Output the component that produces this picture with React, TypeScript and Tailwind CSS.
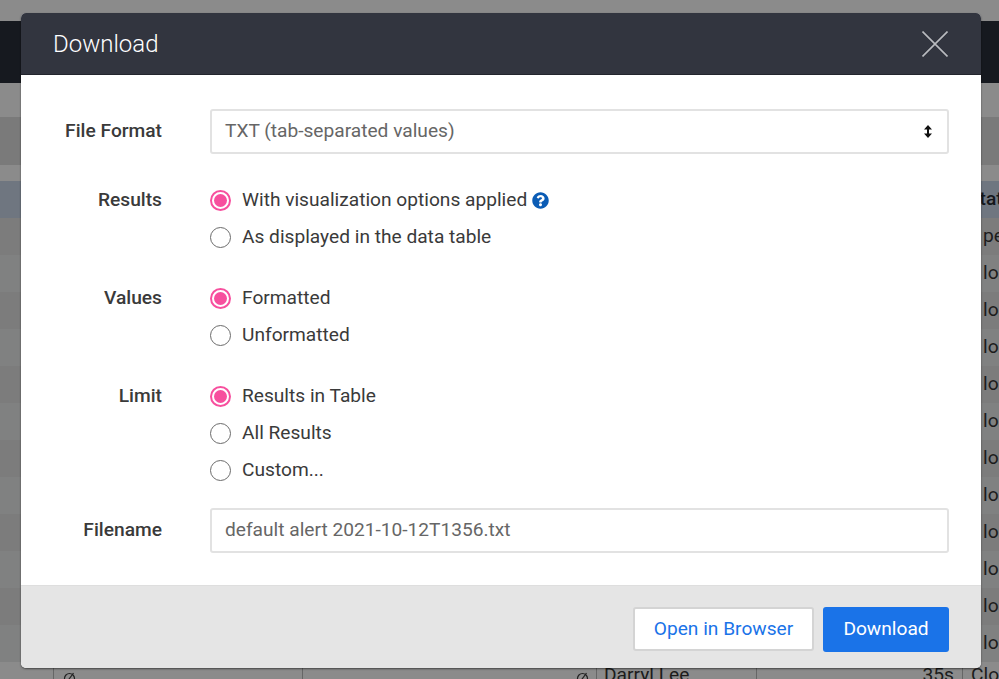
const rows = ['pen', 'losed', 'losed', 'losed', 'losed', 'losed', 'losed', 'losed', 'losed', 'losed', 'losed', 'losed'];

function Radio({ label, checked, help }: { label: string; checked?: boolean; help?: boolean }) {
  return (
    <label className="flex h-[37px] items-center">
      {checked ? (
        <span className="flex h-[21px] w-[21px] items-center justify-center rounded-full border-2 border-[#f74f9e] bg-white">
          <span className="h-[13px] w-[13px] rounded-full bg-[#f74f9e]" />
        </span>
      ) : (
        <span className="h-[21px] w-[21px] rounded-full border-[1.5px] border-[#6b6b6b] bg-white" />
      )}
      <span className="ml-[11px] text-[19.15px] text-[#3a3a3a]">{label}</span>
      {help && (
        <svg className="ml-[5px]" width="17" height="17" viewBox="0 0 512 512">
          <path
            fill="#0b5cb5"
            d="M504 256c0 137-111 248-248 248S8 393 8 256 119 8 256 8s248 111 248 248zM262.700 90c-54.500 0-89.300 23-116.500 63.800-3.500 5.300-2.400 12.400 2.700 16.300l34.700 26.300c5.200 3.900 12.600 3 16.700-2.100 17.900-22.700 30.100-35.800 57.300-35.800 20.400 0 45.700 13.100 45.700 33 0 15-12.400 22.700-32.600 34-23.600 13.200-54.800 29.700-54.800 70.900V302c0 6.600 5.400 12 12 12h56c6.600 0 12-5.400 12-12v-1.300c0-28.600 83.500-29.800 83.500-107.200C380 135.200 319.500 90 262.700 90zM256 339c-25.500 0-46.200 20.700-46.200 46.200 0 25.500 20.700 46.200 46.200 46.200s46.200-20.700 46.200-46.200C302.200 359.700 281.500 339 256 339z"
          />
        </svg>
      )}
    </label>
  );
}

function Label({ children }: { children: string }) {
  return <div className="w-[141px] shrink-0 text-right text-[19.2px] font-medium text-[#3a3a3a]">{children}</div>;
}

function NoEntry() {
  return (
    <svg width="13" height="13" viewBox="0 0 13 13" fill="none" stroke="#222222" strokeWidth="1.2">
      <circle cx="6.500" cy="6.500" r="5" />
      <path d="M10.500 1 L2.500 12" />
    </svg>
  );
}

export default function App() {
  return (
    <div className="relative h-[679px] w-[999px] overflow-hidden bg-[#8b8b8b] font-['Roboto',sans-serif]">
      {/* Page behind the overlay */}
      <div className="h-[21px]" />
      <div className="h-[62px] bg-[#16191f]" />
      <div className="h-[34px]" />
      <div className="h-[48px] bg-[#7a7a7a]" />
      <div className="h-[16px]" />
      <div className="flex h-[37px] items-center whitespace-nowrap bg-[#6f7680] pl-[968px] text-[19.2px] font-medium text-[#15171b]">
        Status
      </div>
      {rows.map((r, i) => (
        <div
          key={i}
          className={`flex h-[37px] items-center whitespace-nowrap pl-[983px] text-[19.2px] text-[#1c1c1c] ${i % 2 === 0 ? 'bg-[#7c7c7c]' : 'bg-[#808181]'}`}
        >
          {r}
        </div>
      ))}
      <div className="flex h-[37px] whitespace-nowrap pl-[53px] text-[19.2px] leading-[22px] text-[#1c1c1c]">
        <div className="w-[250px] shrink-0 border-x border-[#666666] pl-[9px] pt-[10px]"><NoEntry /></div>
        <div className="flex w-[294px] shrink-0 justify-end border-r border-[#666666] pr-[7px] pt-[10px]"><NoEntry /></div>
        <div className="w-[160px] shrink-0 border-r border-[#666666] pl-[7px] pt-[2px]">Darryl Lee</div>
        <div className="w-[206px] shrink-0 border-r border-[#666666] pr-[8px] pt-[2px] text-right">35s</div>
        <div className="shrink-0 pl-[8px] pt-[2px]">Closed</div>
      </div>

      {/* Modal */}
      <div className="absolute left-[21px] top-[13px] flex h-[655px] w-[960px] flex-col overflow-hidden rounded-[5px] bg-white shadow-[0_1px_2px_rgba(0,0,0,0.5)]">
        <div className="flex h-[62px] shrink-0 items-center justify-between border-b border-[#23252d] bg-[#32353f] pl-[32px] pr-[33px]">
          <h2 className="text-[24px] font-light text-white">Download</h2>
          <svg width="26" height="26" viewBox="0 0 26 26" fill="none" stroke="#b9bbbf" strokeWidth="1.6">
            <path d="M0.500 0.500 L25.500 25.500 M25.500 0.500 L0.500 25.500" />
          </svg>
        </div>

        <div className="flex flex-1 flex-col pt-[34px]">
          <div className="flex items-center">
            <Label>File Format</Label>
            <div className="ml-[48px] flex h-[45px] w-[739px] items-center justify-between rounded-[3px] border-2 border-[#e2e2e2] pl-[13px] pr-[15px] text-[19.15px] text-[#666666]">
              <span>TXT (tab-separated values)</span>
              <svg width="8" height="13" viewBox="0 0 8 13" fill="#111111">
                <path d="M4 0 L8 4.500 L5 4.500 L5 8.500 L8 8.500 L4 13 L0 8.500 L3 8.500 L3 4.500 L0 4.500 Z" />
              </svg>
            </div>
          </div>

          <div className="mt-[28px] flex">
            <div className="flex h-[37px] items-center"><Label>Results</Label></div>
            <div className="ml-[48px]">
              <Radio label="With visualization options applied" checked help />
              <Radio label="As displayed in the data table" />
            </div>
          </div>

          <div className="mt-[24px] flex">
            <div className="flex h-[37px] items-center"><Label>Values</Label></div>
            <div className="ml-[48px]">
              <Radio label="Formatted" checked />
              <Radio label="Unformatted" />
            </div>
          </div>

          <div className="mt-[24px] flex">
            <div className="flex h-[37px] items-center"><Label>Limit</Label></div>
            <div className="ml-[48px]">
              <Radio label="Results in Table" checked />
              <Radio label="All Results" />
              <Radio label="Custom..." />
            </div>
          </div>

          <div className="mt-[19px] flex items-center">
            <Label>Filename</Label>
            <div className="ml-[48px] flex h-[45px] w-[739px] items-center rounded-[3px] border-2 border-[#e2e2e2] pl-[13px] text-[19.15px] text-[#666666]">
              default alert 2021-10-12T1356.txt
            </div>
          </div>
        </div>

        <div className="flex h-[83px] shrink-0 items-start justify-end gap-[9px] border-t border-[#dedede] bg-[#e5e5e5] pr-[32px] pt-[21px]">
          <button className="h-[44px] w-[181px] rounded-[3px] border-2 border-[#d4d4d4] bg-white text-[19.15px] text-[#1a73e8]">
            Open in Browser
          </button>
          <button className="h-[45px] w-[126px] rounded-[3px] bg-[#1a73e8] text-[19.15px] text-white">Download</button>
        </div>
      </div>
    </div>
  );
}
